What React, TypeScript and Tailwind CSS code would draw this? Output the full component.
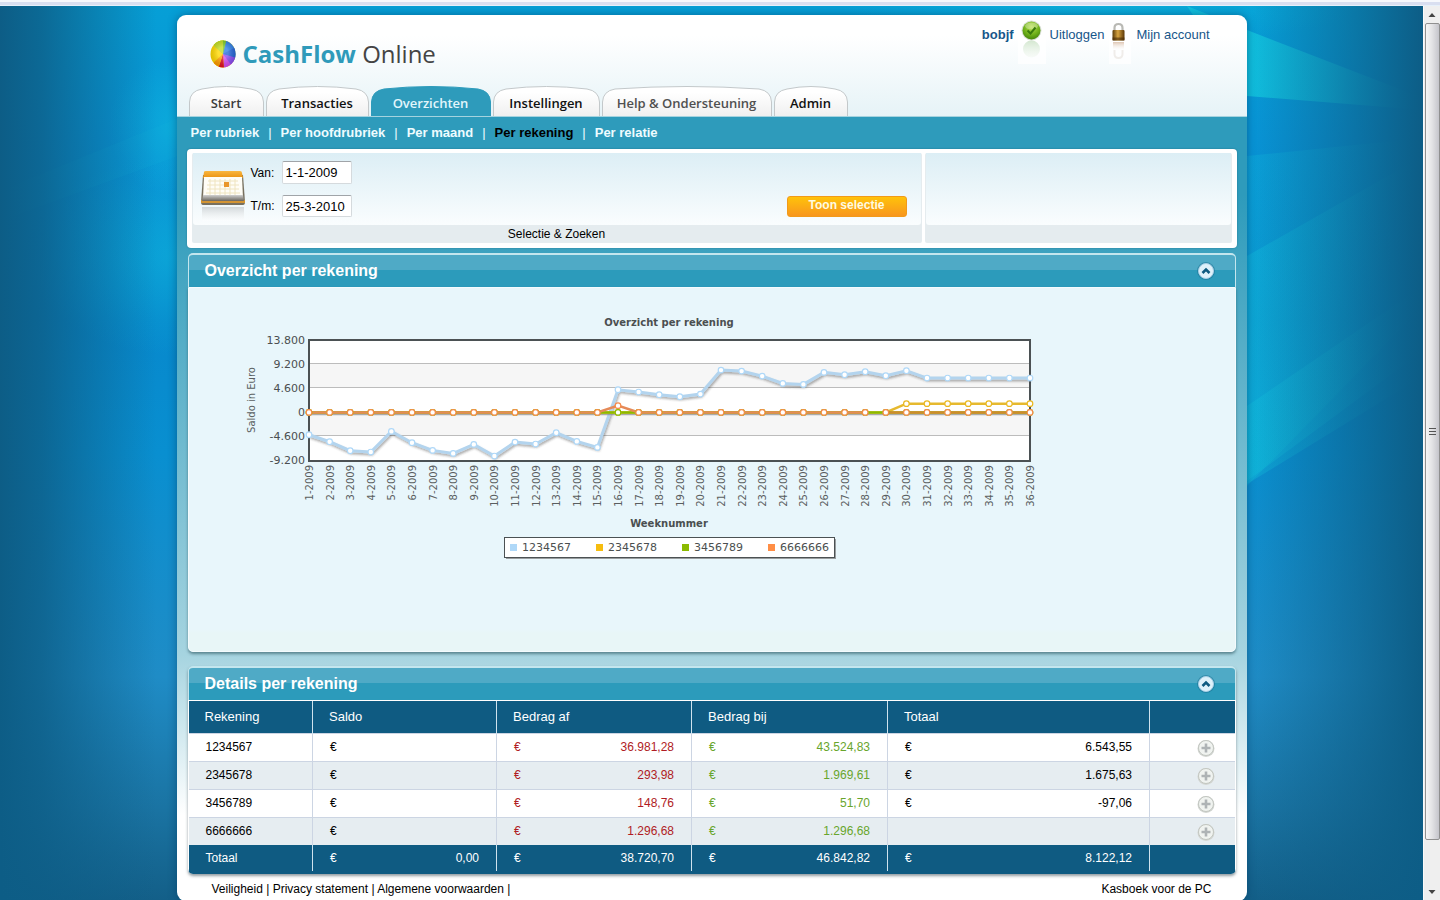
import React from 'react';

type Tab = { label: string; width: number; box: string; tone: string; active?: boolean };

const tabs: Tab[] = [
  { label: 'Start', width: 75, box: 'w-[75px]', tone: 'text-[#3c3c3c]' },
  { label: 'Transacties', width: 103, box: 'w-[103px]', tone: 'text-[#111]' },
  { label: 'Overzichten', width: 120, box: 'w-[120px]', tone: 'text-[#e2f6fb]', active: true },
  { label: 'Instellingen', width: 107, box: 'w-[107px]', tone: 'text-[#111]' },
  { label: 'Help & Ondersteuning', width: 170, box: 'w-[170px]', tone: 'text-[#505050]' },
  { label: 'Admin', width: 74, box: 'w-[74px]', tone: 'text-[#111]' },
];

const subTabs = ['Per rubriek', 'Per hoofdrubriek', 'Per maand', 'Per rekening', 'Per relatie'];

const balance = [
  -4280, -5620, -7350, -7600, -3640, -5810, -7280, -7860, -6130, -8370, -5690, -6070, -3900, -5560, -6710, 4340, 3900,
  3390, 3000, 3510, 8110, 7920, 6960, 5560, 5370, 7670, 7220, 7800, 7030, 7990, 6580, 6580, 6580, 6580, 6580, 6580,
];
const weeks = balance.map((_, i) => i + 1);
const savings = weeks.map((w) => (w >= 30 ? 1676 : 0));
const flat = weeks.map(() => 0);
const spike = weeks.map((w) => (w === 16 ? 1297 : 0));

const px = (i: number) => 69 + i * 20.6;
const py = (v: number) => 102.4 - (v / 4600) * 24;
const line = (values: number[], from = 0) => values.map((v, i) => `${px(i + from)},${py(v)}`).join(' ');

const ticks = ['13.800', '9.200', '4.600', '0', '-4.600', '-9.200'];
const legend = [
  { name: '1234567', color: '#afd8f8' },
  { name: '2345678', color: '#f6bd0f' },
  { name: '3456789', color: '#8bba00' },
  { name: '6666666', color: '#ff8e46' },
];

type Amount = string | null;
const rows: { account: string; off: Amount; on: Amount; total: Amount }[] = [
  { account: '1234567', off: '36.981,28', on: '43.524,83', total: '6.543,55' },
  { account: '2345678', off: '293,98', on: '1.969,61', total: '1.675,63' },
  { account: '3456789', off: '148,76', on: '51,70', total: '-97,06' },
  { account: '6666666', off: '1.296,68', on: '1.296,68', total: null },
];

function Backdrop() {
  return (
    <svg className="absolute inset-0 h-full w-full" viewBox="0 0 1423 894" preserveAspectRatio="none" aria-hidden="true">
      <defs>
        <linearGradient id="sky" x1="0" y1="0" x2="0" y2="1">
          <stop offset="0" stopColor="#069fd6" />
          <stop offset="0.15" stopColor="#0894d6" />
          <stop offset="0.35" stopColor="#0788cc" />
          <stop offset="0.5" stopColor="#098fd0" />
          <stop offset="0.75" stopColor="#1f8cc6" />
          <stop offset="0.9" stopColor="#1a73a2" />
          <stop offset="1" stopColor="#135f88" />
        </linearGradient>
        <linearGradient id="sides" x1="0" y1="0" x2="1" y2="0">
          <stop offset="0" stopColor="#0d5d86" />
          <stop offset="0.03" stopColor="#0d5d86" stopOpacity="0.8" />
          <stop offset="0.11" stopColor="#0d5d86" stopOpacity="0" />
          <stop offset="0.88" stopColor="#0d5d86" stopOpacity="0" />
          <stop offset="0.96" stopColor="#0d5d86" stopOpacity="0.65" />
          <stop offset="1" stopColor="#0d5d86" />
        </linearGradient>
        <linearGradient id="beam" gradientUnits="userSpaceOnUse" x1="1247" y1="0" x2="1423" y2="0">
          <stop offset="0" stopColor="#12c4de" stopOpacity="0.85" />
          <stop offset="0.5" stopColor="#12c4de" stopOpacity="0.6" />
          <stop offset="1" stopColor="#12c4de" stopOpacity="0.05" />
        </linearGradient>
        <radialGradient id="glow">
          <stop offset="0" stopColor="#10c0e0" stopOpacity="0.85" />
          <stop offset="1" stopColor="#10c0e0" stopOpacity="0" />
        </radialGradient>
      </defs>
      <rect width="1423" height="894" fill="url(#sky)" />
      <ellipse cx="178" cy="120" rx="70" ry="70" fill="url(#glow)" opacity="0.6" />
      <ellipse cx="178" cy="250" rx="150" ry="100" fill="url(#glow)" opacity="0.55" />
      <path d="M0 185L178 112V150L0 215Z" fill="#14b8dc" opacity="0.15" />
      <ellipse cx="1100" cy="0" rx="260" ry="40" fill="url(#glow)" opacity="0.5" />
      <path d="M1187 0L1247 24L1423 92V104L1247 90Z" fill="url(#beam)" />
      <path d="M1247 150L1423 132V300L1247 480Z" fill="url(#beam)" opacity="0.3" />
      <path d="M1247 250L1423 150V345L1247 475Z" fill="url(#beam)" opacity="0.4" />
      <path d="M1247 400L1423 280V370L1247 478Z" fill="url(#beam)" opacity="0.4" />
      <rect width="1423" height="894" fill="url(#sides)" />
    </svg>
  );
}

function Logo() {
  return (
    <a href="#start" className="flex items-center gap-[7px] leading-7">
      <svg width="26" height="28" viewBox="0 0 26 28" aria-hidden="true">
        <defs>
          <clipPath id="pie">
            <ellipse cx="13" cy="14" rx="12.5" ry="13.5" />
          </clipPath>
          <radialGradient id="shine" cx="0.5" cy="0.45">
            <stop offset="0.4" stopColor="#fff" stopOpacity="0.2" />
            <stop offset="1" stopColor="#000" stopOpacity="0.12" />
          </radialGradient>
        </defs>
        <g clipPath="url(#pie)">
          <rect width="26" height="28" fill="#ffd800" />
          <path d="M13 14L3 4V-2H14Z" fill="#8fcf1c" />
          <path d="M13 14L5 7L2 2L13 -2Z" fill="#c3dc20" />
          <path d="M13 14L13 -2H18L15 8Z" fill="#7cc628" />
          <path d="M13 14L17 -2H28V19Z" fill="#2f7fe6" />
          <path d="M13 14L28 6V22L22 22Z" fill="#2565d8" />
          <path d="M13 14L24 23L14 30Z" fill="#d44df0" />
          <path d="M13 14L27 18V26L22 26Z" fill="#8a4df0" />
          <path d="M13 14L14 29L8 29Z" fill="#e01020" />
          <path d="M13 14L8 29L2 24Z" fill="#ff9d00" />
          <rect width="26" height="28" fill="url(#shine)" />
        </g>
      </svg>
      <span className="font-['Open_Sans','Noto_Sans',sans-serif] text-[24px] text-[#444]">
        <b className="font-bold text-[#2f9aba]">CashFlow</b> Online
      </span>
    </a>
  );
}

function CheckIcon() {
  return (
    <svg width="28" height="44" viewBox="0 0 28 44" aria-hidden="true">
      <defs>
        <radialGradient id="ball" cx="0.5" cy="0.3" r="0.75">
          <stop offset="0" stopColor="#b8e04c" />
          <stop offset="0.6" stopColor="#6cae18" />
          <stop offset="1" stopColor="#3f7d08" />
        </radialGradient>
        <linearGradient id="ballFade" x1="0" y1="0" x2="0" y2="1">
          <stop offset="0" stopColor="#a9cfa0" stopOpacity="0.5" />
          <stop offset="1" stopColor="#dfeedd" stopOpacity="0.2" />
        </linearGradient>
      </defs>
      <rect width="28" height="44" fill="#fff" opacity="0.75" />
      <circle cx="13.500" cy="10.500" r="10" fill="#d8dfd4" />
      <circle cx="13.500" cy="10.500" r="9" fill="url(#ball)" />
      <ellipse cx="13.500" cy="6" rx="6.500" ry="3.500" fill="#fff" opacity="0.3" />
      <path d="M9.500 10.500L12.500 13.500L17.500 7.500" fill="none" stroke="#3a7a0c" strokeWidth="2" />
      <circle cx="13.500" cy="29" r="8.500" fill="url(#ballFade)" />
    </svg>
  );
}

function LockIcon() {
  return (
    <svg width="22" height="44" viewBox="0 0 22 44" aria-hidden="true">
      <defs>
        <linearGradient id="brass" x1="0" y1="0" x2="1" y2="0">
          <stop offset="0" stopColor="#5a3a08" />
          <stop offset="0.45" stopColor="#d8a440" />
          <stop offset="1" stopColor="#5a3606" />
        </linearGradient>
        <linearGradient id="lockFade" x1="0" y1="0" x2="0" y2="1">
          <stop offset="0" stopColor="#c9a080" stopOpacity="0.6" />
          <stop offset="1" stopColor="#fff" stopOpacity="0" />
        </linearGradient>
      </defs>
      <rect width="22" height="44" fill="#fff" opacity="0.75" />
      <path d="M5.500 13V8Q5.500 4 9.500 4T13.500 8V13" fill="none" stroke="#b9b9b4" strokeWidth="2.200" />
      <rect x="3.500" y="10" width="12" height="10.500" rx="1" fill="url(#brass)" />
      <rect x="3.500" y="17.500" width="12" height="3" fill="#4a2c06" opacity="0.6" />
      <rect x="4" y="22" width="11" height="9" fill="url(#lockFade)" />
      <path d="M5.500 30V34Q5.500 38 9.500 38T13.500 34V30" fill="none" stroke="#f0edea" strokeWidth="2" />
    </svg>
  );
}

function CalendarIcon() {
  return (
    <svg width="46" height="52" viewBox="0 0 46 52" aria-hidden="true">
      <defs>
        <linearGradient id="calTop" x1="0" y1="0" x2="0" y2="1">
          <stop offset="0" stopColor="#f9b640" />
          <stop offset="1" stopColor="#ea9210" />
        </linearGradient>
        <linearGradient id="calFoot" x1="0" y1="0" x2="0" y2="1">
          <stop offset="0" stopColor="#d0d0d0" />
          <stop offset="1" stopColor="#6b665e" />
        </linearGradient>
        <linearGradient id="calFade" x1="0" y1="0" x2="0" y2="1">
          <stop offset="0" stopColor="#c4c8ca" stopOpacity="0.7" />
          <stop offset="1" stopColor="#fff" stopOpacity="0.3" />
        </linearGradient>
      </defs>
      <path d="M3 6H43L45 33Q45 36 43 36H3Q1 36 1 33Z" fill="#77705f" />
      <path d="M1 31H45V34H1Z" fill="#d39433" />
      <path d="M4 3Q4 2 6 2H40Q42 2 42 4L43 9H3Z" fill="url(#calTop)" />
      <path d="M4 8H42L43 29H3Z" fill="#fffdf6" />
      <path d="M8 12H38M7 16H39M7 20H39M6 24H40M10 10V27M15 10V27M20 10V27M25 10V27M30 10V27M35 10V27" stroke="#efe4c0" strokeWidth="1" />
      <rect x="24" y="13" width="5" height="5" fill="#e9962a" />
      <path d="M3 26H43L44 32H2Z" fill="url(#calFoot)" />
      <path d="M2 38H44V52H2Z" fill="url(#calFade)" />
    </svg>
  );
}

function Chart() {
  return (
    <svg width="800" height="260" viewBox="0 0 800 260" role="img" aria-label="Overzicht per rekening" className="font-['DejaVu_Sans',Verdana,sans-serif]">
      <defs>
        <filter id="drop" x="-5%" y="-40%" width="110%" height="200%" filterUnits="objectBoundingBox">
          <feDropShadow dx="1" dy="2" stdDeviation="1" floodColor="#333" floodOpacity="0.4" />
        </filter>
      </defs>
      <text x="429" y="16" textAnchor="middle" fontSize="10" fontWeight="bold" fill="#4b4f50">Overzicht per rekening</text>
      <rect x="69" y="30" width="721" height="121" fill="#fff" />
      <rect x="69" y="54" width="721" height="24" fill="#f6f6f6" />
      <rect x="69" y="102" width="721" height="24" fill="#f6f6f6" />
      <path d="M69 53.500H790M69 77.500H790M69 125.500H790" stroke="#bcbcbc" />
      <rect x="69" y="30" width="721" height="121" fill="none" stroke="#4b5153" strokeWidth="2" />
      {ticks.map((t, i) => (
        <text key={t} x="65" y={34 + i * 24} textAnchor="end" fontSize="11" fill="#4b4f50">{t}</text>
      ))}
      <text transform="translate(15 90) rotate(-90)" textAnchor="middle" fontSize="10" fill="#5a5e60">Saldo in Euro</text>
      {weeks.map((w, i) => (
        <text key={w} transform={`translate(${px(i) + 4} 155) rotate(-90)`} textAnchor="end" fontSize="10" fill="#5a5e60">{`${w}-2009`}</text>
      ))}
      <polyline points={line(balance)} fill="none" stroke="#b3d4ee" strokeWidth="3" filter="url(#drop)" />
      <path d="M69 104.500H790" stroke="#8c8c8c" strokeWidth="1.500" opacity="0.7" />
      <polyline points={line(savings)} fill="none" stroke="#e6b92e" strokeWidth="2.500" />
      <polyline points={line(flat)} fill="none" stroke="#8bba00" strokeWidth="2.500" />
      <polyline points={line(spike.slice(0, 28))} fill="none" stroke="#e58a58" strokeWidth="2.500" />
      <polyline points={line(flat.slice(28), 28)} fill="none" stroke="#cf8a2e" strokeWidth="2.500" />
      {[
        { values: balance, color: '#afd8f8' },
        { values: savings, color: '#e9b820' },
        { values: flat, color: '#8bba00' },
        { values: spike, color: '#f58a4a' },
      ].map((s) =>
        s.values.map((v, i) => (
          <circle key={`${s.color}${i}`} cx={px(i)} cy={py(v)} r="2.800" fill="#fff" stroke={s.color} strokeWidth="1.200" />
        )),
      )}
      <text x="429" y="217" textAnchor="middle" fontSize="10" fontWeight="bold" fill="#4b4f50">Weeknummer</text>
      <rect x="266" y="229" width="330" height="20" fill="#777" opacity="0.7" />
      <rect x="264.500" y="227.500" width="330" height="20" fill="#fff" stroke="#4b5153" />
      {legend.map((l, i) => (
        <g key={l.name}>
          <rect x={270 + i * 86} y="234" width="7" height="7" fill={l.color} />
          <text x={282 + i * 86} y="241" fontSize="11" fill="#4b4f50">{l.name}</text>
        </g>
      ))}
    </svg>
  );
}

function PanelHeader({ title }: { title: string }) {
  return (
    <div className="flex items-center justify-between rounded-t-[5px] border border-b-0 border-[#c4e6ee] border-t-2 bg-[linear-gradient(#4faac6_0_48%,#2c9bbb_48%)] pr-5 pl-4">
      <h2 className="text-[16px] leading-8 font-bold text-white">{title}</h2>
      <button type="button" aria-label={`${title} inklappen`}>
        <svg width="18" height="18" viewBox="0 0 18 18" aria-hidden="true">
          <circle cx="9" cy="9" r="9" fill="#17708f" opacity="0.5" />
          <circle cx="9" cy="9" r="7.500" fill="#dff1fa" stroke="#a9cfe6" />
          <path d="M5.500 11L9 7.500L12.500 11" fill="none" stroke="#0f5a80" strokeWidth="2.600" />
        </svg>
      </button>
    </div>
  );
}

function Money({ value }: { value: Amount }) {
  return (
    <span className="flex justify-between">
      <span>€</span>
      <span>{value}</span>
    </span>
  );
}

function DetailsTable() {
  const cell = 'border-r border-[#ccd5e3] px-[17px]';
  const head = 'border-r border-[#cfe3ee] px-4 text-left font-normal';
  return (
    <table className="w-full table-fixed border-collapse text-[12px]">
      <colgroup>
        <col className="w-[124px]" />
        <col className="w-[184px]" />
        <col className="w-[195px]" />
        <col className="w-[196px]" />
        <col className="w-[262px]" />
        <col />
      </colgroup>
      <thead className="bg-[#0f5b82] text-[13px] leading-8 text-white">
        <tr>
          {['Rekening', 'Saldo', 'Bedrag af', 'Bedrag bij', 'Totaal'].map((h) => (
            <th key={h} scope="col" className={head}>{h}</th>
          ))}
          <td />
        </tr>
      </thead>
      <tbody className="text-black">
        {rows.map((r) => (
          <tr key={r.account} className="border-t border-[#ccd5e3] bg-white leading-[27px] even:bg-[#e6edf1]">
            <td className={cell}>{r.account}</td>
            <td className={cell}><Money value={null} /></td>
            <td className={`${cell} text-[#b01c24]`}><Money value={r.off} /></td>
            <td className={`${cell} text-[#68a52c]`}><Money value={r.on} /></td>
            <td className={cell}>{r.total && <Money value={r.total} />}</td>
            <td className="pr-5">
              <button type="button" aria-label={`Details van ${r.account}`} className="ml-auto block">
                <svg width="18" height="18" viewBox="0 0 18 18" aria-hidden="true">
                  <circle cx="9" cy="9.500" r="8.500" fill="#d3d6d2" />
                  <circle cx="9" cy="9" r="7.500" fill="#f0f3f0" stroke="#c2c6c0" />
                  <path d="M9 4.500V13.500M4.500 9H13.500" stroke="#aeb3b5" strokeWidth="2.600" />
                </svg>
              </button>
            </td>
          </tr>
        ))}
      </tbody>
      <tfoot className="bg-[#0f5b82] leading-[26px] text-white">
        <tr>
          <td className="border-r border-[#cfe3ee] px-[17px]">Totaal</td>
          {['0,00', '38.720,70', '46.842,82', '8.122,12'].map((v) => (
            <td key={v} className="border-r border-[#cfe3ee] px-[17px]"><Money value={v} /></td>
          ))}
          <td />
        </tr>
      </tfoot>
    </table>
  );
}

function TabLink({ tab }: { tab: Tab }) {
  const w = tab.width;
  const r = w - 0.5;
  return (
    <a href="#tab" className={`relative flex h-[30px] items-center justify-center pt-1.5 text-[13px] font-semibold ${tab.box} ${tab.tone}`}>
      <svg className="absolute inset-0" width={w} height="30" viewBox={`0 0 ${w} 30`} aria-hidden="true">
        <path
          d={`M0.500 31V16Q1 5 13 3Q${w / 2} -2 ${w - 13} 3Q${w - 1} 5 ${r} 16V31Z`}
          fill={tab.active ? '#2e9bbb' : 'url(#tabFill)'}
          stroke={tab.active ? '#2e9bbb' : '#c3c8ca'}
        />
      </svg>
      <span className="relative">{tab.label}</span>
    </a>
  );
}

function ScrollRail() {
  return (
    <div className="flex w-[17px] flex-col items-center border-l border-[#fafafa] bg-[#efefef]" aria-hidden="true">
      <svg width="16" height="17" viewBox="0 0 16 17"><path d="M4.500 11L8 7L11.500 11Z" fill="#444" /></svg>
      <div className="flex w-[15px] grow-[816] items-center justify-center rounded-xs border border-[#909090] bg-[linear-gradient(90deg,#f6f6f6,#e4e4e6_45%,#c5c5cb)]">
        <svg width="8" height="9" viewBox="0 0 8 9"><path d="M1 1.500H8M1 4.500H8M1 7.500H8" stroke="#555" /></svg>
      </div>
      <div className="grow-[44]" />
      <svg width="16" height="17" viewBox="0 0 16 17"><path d="M4.500 7L8 11L11.500 7Z" fill="#444" /></svg>
    </div>
  );
}

export default function App() {
  return (
    <div className="flex h-screen flex-col overflow-hidden font-['Liberation_Sans',Arial,sans-serif]">
      <div className="h-1.5 shrink-0 border-t-2 border-b border-t-[#f6f8fc] border-b-[#e6f0fa] bg-[#d9dff0]" />
      <div className="flex min-h-0 flex-1">
        <div className="relative min-w-0 flex-1 overflow-hidden pt-[9px]">
          <Backdrop />
          <div className="relative mx-auto w-full max-w-[1070px] overflow-hidden rounded-[9px] bg-[linear-gradient(#2e9bbb_0,#2e9bbb_180px,#a6d4e0_640px,#fff_800px)] shadow-[0_0_8px_rgba(0,50,90,0.5)]">
            <header className="border-b border-[#a5d3df] bg-[linear-gradient(#fff_20%,#e6f3f7)] pl-3">
              <svg className="absolute" width="0" height="0" aria-hidden="true">
                <linearGradient id="tabFill" x1="0" y1="0" x2="0" y2="1">
                  <stop offset="0.2" stopColor="#fff" />
                  <stop offset="1" stopColor="#efefef" />
                </linearGradient>
              </svg>
              <div className="flex items-start justify-between pb-[18px]">
                <div className="pt-[25px] pl-[21px]"><Logo /></div>
                <div className="flex items-start gap-1 pt-[5px] pr-[37px] text-[13px] leading-[29px] text-[#17568a]">
                  <b>bobjf</b>
                  <CheckIcon />
                  <a href="#uit">Uitloggen</a>
                  <LockIcon />
                  <a href="#account" className="pl-0.5">Mijn account</a>
                </div>
              </div>
              <nav className="flex gap-0.5 font-['Open_Sans','Noto_Sans',sans-serif]">
                {tabs.map((t) => <TabLink key={t.label} tab={t} />)}
              </nav>
            </header>

            <nav className="flex px-3.5 text-[13px] leading-8 font-bold text-[#eefcff]">
              {subTabs.map((s, i) => (
                <React.Fragment key={s}>
                  {i > 0 && <span className="px-[9px] font-normal">|</span>}
                  <a href="#sub" className={s === 'Per rekening' ? 'text-black' : ''}>{s}</a>
                </React.Fragment>
              ))}
            </nav>

            <main className="px-[11px]">
              <form className="-mx-px flex gap-[3px] rounded-[4px] bg-white px-[5px] pt-1 pb-[5px] text-[12px] text-black shadow-[0_0_2px_rgba(0,60,80,0.4)]" onSubmit={(e) => e.preventDefault()}>
                <div className="flex-1 rounded-xs bg-[#e5ecef] px-px">
                  <div className="flex items-end rounded-b-[3px] bg-[linear-gradient(#dceef5,#fafdfe)] pt-2 pr-3.5 pb-1 pl-[7px]">
                    <CalendarIcon />
                    <div className="mb-1 ml-[5px] grid flex-1 grid-cols-[auto_1fr] items-center gap-x-[7px] gap-y-[11px]">
                      <label htmlFor="van">Van:</label>
                      <input id="van" defaultValue="1-1-2009" className="h-[23px] w-[70px] rounded-xs border border-[#d5dadd] border-t-[#a0a4a8] bg-white px-[3px] text-[13px]" />
                      <label htmlFor="tm">T/m:</label>
                      <input id="tm" defaultValue="25-3-2010" className="h-[22px] w-[70px] rounded-xs border border-[#d5dadd] border-t-[#a0a4a8] bg-white px-[3px] text-[13px]" />
                    </div>
                    <button type="submit" className="mb-1 h-[21px] w-[120px] rounded-[3px] border border-[#f29a1a] bg-[linear-gradient(#ffc20a,#f8961e)] pb-1 text-[12px] leading-4 font-bold text-[#fffbe0]">Toon selectie</button>
                  </div>
                  <p className="text-center leading-[18px]">Selectie &amp; Zoeken</p>
                </div>
                <div className="w-[307px] rounded-xs bg-[#e5ecef] px-px pb-[18px]">
                  <div className="h-full rounded-b-[3px] bg-[linear-gradient(#dceef5,#fafdfe)]" />
                </div>
              </form>

              <section className="mt-[5px]">
                <PanelHeader title="Overzicht per rekening" />
                <div className="overflow-x-auto rounded-b-[5px] border border-[#f4fbfd] bg-[linear-gradient(#e8f6fb_94%,#e8f6f7_95%)] pt-[22px] pb-[81px] pl-[51px] shadow-[0_2px_3px_rgba(40,80,90,0.6)]">
                  <Chart />
                </div>
              </section>

              <section className="mt-3.5 overflow-hidden rounded-[5px] shadow-[0_2px_3px_rgba(40,60,70,0.5)]">
                <PanelHeader title="Details per rekening" />
                <div className="border-x border-t border-white bg-[#0f5b82] pb-[3px]">
                  <DetailsTable />
                </div>
              </section>
            </main>

            <footer className="flex justify-between px-[35px] pt-[7px] pb-1 text-[12px] leading-4 text-black">
              <p><a href="#veiligheid">Veiligheid</a> | <a href="#privacy">Privacy statement</a> | <a href="#voorwaarden">Algemene voorwaarden</a> |</p>
              <a href="#kasboek">Kasboek voor de PC</a>
            </footer>
          </div>
        </div>
        <ScrollRail />
      </div>
    </div>
  );
}
